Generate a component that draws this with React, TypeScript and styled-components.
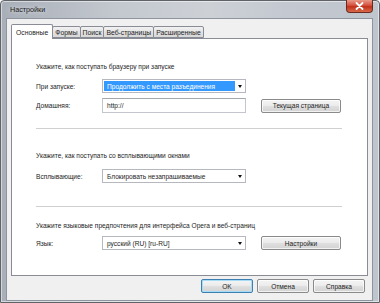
import React from 'react';
import styled, { createGlobalStyle } from 'styled-components';

const GlobalStyle = createGlobalStyle`
  html, body {
    margin: 0;
    padding: 0;
    width: 380px;
    height: 303px;
    overflow: hidden;
    background: #ffffff;
  }
  * { box-sizing: border-box; }
`;

const Window = styled.div`
  position: relative;
  width: 380px;
  height: 303px;
  padding: 17px 6px 4px 5px;
  display: flex;
  flex-direction: column;
  font-family: "Liberation Sans", Arial, sans-serif;
  font-size: 6.6px;
  color: #1e1e1e;
  background: linear-gradient(90deg, #a9afb8 0%, #c3c8cf 30%, #cdd1d6 55%, #c4c9d1 75%, #bfc5cd 100%);
  border: 1px solid #5f6368;
  border-radius: 4px 4px 0 0;
  box-shadow: inset 0 0 0 1px rgba(255, 255, 255, 0.5);
`;

const Title = styled.div`
  position: absolute;
  left: 9px;
  top: 4px;
  font-size: 7.2px;
  color: #1a1a1a;
  text-shadow: 0 0 4px rgba(255, 255, 255, 0.9);
`;

const CloseButton = styled.div`
  position: absolute;
  right: 6px;
  top: -1px;
  width: 27px;
  height: 13px;
  border: 1px solid #6b2a20;
  border-top: none;
  border-radius: 0 0 4px 4px;
  background: linear-gradient(180deg, #e89a8a 0%, #d4503c 45%, #c2301a 55%, #d86a4a 100%);
  display: flex;
  align-items: center;
  justify-content: center;
`;

const Client = styled.div`
  flex: 1;
  display: flex;
  flex-direction: column;
  background: #f0f0f0;
  border: 1px solid #8e959e;
  padding: 5px 4px 7px 4px;
`;

const TabStrip = styled.div`
  display: flex;
  align-items: flex-end;
  height: 14px;
  position: relative;
  z-index: 1;
`;

const Tab = styled.div<{ $active?: boolean }>`
  height: ${(p) => (p.$active ? '15px' : '12px')};
  margin-bottom: ${(p) => (p.$active ? '-1px' : '0')};
  padding: 0 ${(p) => (p.$active ? '4px' : '2px')};
  display: flex;
  align-items: center;
  border: 1px solid #898c95;
  border-bottom: ${(p) => (p.$active ? 'none' : '1px solid #898c95')};
  border-radius: 2px 2px 0 0;
  margin-right: -1px;
  background: ${(p) => (p.$active ? '#ffffff' : 'linear-gradient(180deg, #f2f2f2 0%, #e3e3e3 50%, #d8d8d8 100%)')};
  white-space: nowrap;
  font-size: 6.8px;
`;

const Panel = styled.div`
  height: 238px;
  background: #ffffff;
  border: 1px solid #898c95;
  padding: 23px 25px 0 24px;
  display: flex;
  flex-direction: column;
`;

const Heading = styled.div<{ $gap: number }>`
  height: 10px;
  line-height: 10px;
  margin-bottom: ${(p) => p.$gap}px;
`;

const Row = styled.div<{ $gap?: number }>`
  display: flex;
  align-items: center;
  margin-top: ${(p) => p.$gap ?? 0}px;
`;

const Label = styled.div`
  width: 66px;
`;

const Select = styled.div`
  width: 144px;
  height: 14px;
  border: 1px solid #b5b8be;
  background: #ffffff;
  display: flex;
  align-items: center;
  padding: 1px;
`;

const SelectValue = styled.div<{ $highlight?: boolean }>`
  flex: 1;
  height: 100%;
  display: flex;
  align-items: center;
  padding-left: 3px;
  background: ${(p) => (p.$highlight ? '#3399ff' : 'transparent')};
  color: ${(p) => (p.$highlight ? '#ffffff' : '#1e1e1e')};
  white-space: nowrap;
  overflow: hidden;
`;

const Arrow = styled.div`
  width: 9px;
  display: flex;
  justify-content: center;
  &::after {
    content: '';
    border-left: 2.5px solid transparent;
    border-right: 2.5px solid transparent;
    border-top: 3px solid #111;
  }
`;

const TextInput = styled.div`
  width: 144px;
  height: 15px;
  border: 1px solid #c3c6cc;
  border-top-color: #a3a7ae;
  background: #ffffff;
  display: flex;
  align-items: center;
  padding-left: 4px;
`;

const Button = styled.div<{ $width?: number; $default?: boolean }>`
  width: ${(p) => p.$width ?? 80}px;
  height: 14px;
  display: flex;
  align-items: center;
  justify-content: center;
  border: 1px solid ${(p) => (p.$default ? '#3c7fb1' : '#8a8a8a')};
  border-radius: 2px;
  background: linear-gradient(180deg, #f4f4f4 0%, #ececec 45%, #dedede 55%, #d3d3d3 100%);
  box-shadow: inset 0 0 0 1px ${(p) => (p.$default ? '#a6dcf5' : 'rgba(255,255,255,0.7)')};
  white-space: nowrap;
`;

const SideButton = styled(Button)`
  margin-left: 15px;
`;

const Separator = styled.div<{ $top: number; $bottom: number }>`
  height: 1px;
  background: #d0d0d0;
  margin-top: ${(p) => p.$top}px;
  margin-bottom: ${(p) => p.$bottom}px;
`;

const Footer = styled.div`
  display: flex;
  justify-content: flex-end;
  gap: 4px;
  margin-top: 3px;
  padding-right: 3px;
`;

export default function App() {
  return (
    <>
      <GlobalStyle />
      <Window>
        <Title>Настройки</Title>
        <CloseButton>
          <svg width="9" height="8" viewBox="0 0 9 8">
            <path d="M1.5 1 L7.5 7 M7.5 1 L1.5 7" stroke="#ffffff" strokeWidth="1.8" strokeLinecap="round" />
          </svg>
        </CloseButton>
        <Client>
          <TabStrip>
            <Tab $active>Основные</Tab>
            <Tab>Формы</Tab>
            <Tab>Поиск</Tab>
            <Tab>Веб-страницы</Tab>
            <Tab>Расширенные</Tab>
          </TabStrip>
          <Panel>
            <Heading $gap={7}>Укажите, как поступать браузеру при запуске</Heading>
            <Row>
              <Label>При запуске:</Label>
              <Select>
                <SelectValue $highlight>Продолжить с места разъединения</SelectValue>
                <Arrow />
              </Select>
            </Row>
            <Row $gap={5}>
              <Label>Домашняя:</Label>
              <TextInput>http://</TextInput>
              <SideButton>Текущая страница</SideButton>
            </Row>
            <Separator $top={15} $bottom={22} />
            <Heading $gap={8}>Укажите, как поступать со всплывающими окнами</Heading>
            <Row>
              <Label>Всплывающие:</Label>
              <Select>
                <SelectValue>Блокировать незапрашиваемые</SelectValue>
                <Arrow />
              </Select>
            </Row>
            <Separator $top={23} $bottom={14} />
            <Heading $gap={5}>Укажите языковые предпочтения для интерфейса Opera и веб-страниц</Heading>
            <Row>
              <Label>Язык:</Label>
              <Select>
                <SelectValue>русский (RU) [ru-RU]</SelectValue>
                <Arrow />
              </Select>
              <SideButton>Настройки</SideButton>
            </Row>
          </Panel>
          <Footer>
            <Button $width={52} $default>OK</Button>
            <Button $width={52}>Отмена</Button>
            <Button $width={52}>Справка</Button>
          </Footer>
        </Client>
      </Window>
    </>
  );
}
